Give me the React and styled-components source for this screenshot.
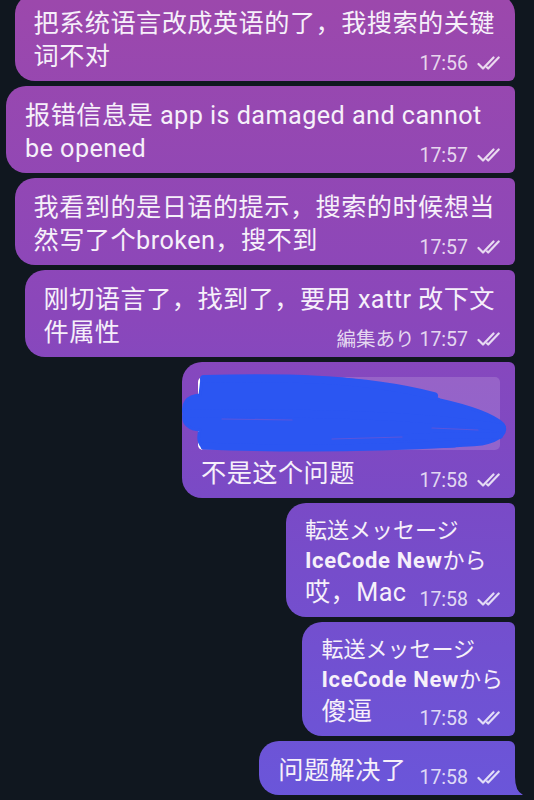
import React from 'react';
import styled, { createGlobalStyle, css } from 'styled-components';

const GlobalStyle = createGlobalStyle`
  html, body {
    margin: 0;
    padding: 0;
    background: #10171f;
  }
  body {
    font-family: Roboto, "Noto Sans CJK SC", sans-serif;
  }
`;

const Chat = styled.main`
  height: 100vh;
  overflow: hidden;
  box-sizing: border-box;
  display: flex;
  flex-direction: column;
  justify-content: flex-end;
  align-items: flex-end;
  gap: 5px;
  padding: 0 19px 5px 0;
`;

const Bubble = styled.div`
  position: relative;
  flex-shrink: 0;
  box-sizing: border-box;
  max-width: 509px;
  padding: 13px 12px 7px 19px;
  border-radius: 20px ${(p) => (p.$first ? '20px' : '6px')}
    ${(p) => (p.$tail ? '0' : '6px')} 20px;
  background: linear-gradient(180deg, #9c48ac 0%, #8a47bb 40%, #7a4ac6 62%, #6a56da 100%) fixed;
  color: #f6f0fa;
  font-size: 25.2px;
  line-height: 33px;
  letter-spacing: 0.45px;

  ${(p) =>
    p.$tail &&
    css`
      &::after {
        content: '';
        position: absolute;
        right: -8px;
        bottom: 0;
        width: 8px;
        height: 18px;
        background: inherit;
        clip-path: path('M0 0 Q0 14 8 18 L0 18 Z');
      }
    `}
`;

const Text = styled.div`
  display: flow-root;
  margin-right: 8px;
  white-space: pre-line;
`;

const Meta = styled.span`
  float: right;
  display: flex;
  align-items: baseline;
  gap: 9px;
  margin: 14px -8px 0 13px;
  font-size: 19.5px;
  line-height: 20px;
  letter-spacing: 0;
  color: rgba(255, 255, 255, 0.8);
  white-space: nowrap;
`;

const Checks = styled.svg`
  width: 26px;
  height: 14px;
  flex-shrink: 0;
`;

const ForwardLine = styled.div`
  font-size: 22px;
  line-height: 30px;
  letter-spacing: 0;
  white-space: nowrap;
`;

const SenderName = styled.b`
  font-weight: 700;
  letter-spacing: 0.7px;
`;

const Quote = styled.div`
  box-sizing: border-box;
  width: 302px;
  height: 73px;
  margin: 2px 3px 7px -3px;
  border-left: 3px solid #ffffff;
  border-radius: 5px;
  background: rgba(255, 255, 255, 0.15);
`;

const Scribble = styled.svg`
  position: absolute;
  left: 0;
  top: 12px;
  width: 333px;
  height: 82px;
  pointer-events: none;
`;

const DoubleCheck = () => (
  <Checks viewBox="0 0 26 14" fill="none" stroke="currentColor" strokeWidth="2.2" strokeLinecap="round" strokeLinejoin="round">
    <path d="M1.5 8 L6 12.5 L16.5 1.5" />
    <path d="M10 11.3 L11.2 12.5 L21.7 1.5" />
  </Checks>
);

const ScribbleMark = () => (
  <Scribble viewBox="0 0 333 82">
    <g fill="#2b56f2" stroke="#2b56f2" strokeLinecap="round" strokeLinejoin="round">
      <path
        strokeWidth="3"
        d="M20 4 C60 2 120 2 160 5 C200 9 235 16 258 26 C285 32 310 40 321 50 C326 58 320 66 300 70 C260 74 120 75 22 73 C16 71 16 62 18 56 C8 56 0 50 2 40 C0 30 4 22 18 21 Z"
      />
      <path fill="none" strokeWidth="8" d="M22 5 C90 3 180 3 252 22" />
      <path fill="none" strokeWidth="8" d="M5 40 C100 38 240 40 320 54" />
      <path fill="none" strokeWidth="7" d="M22 72 C120 76 200 74 272 70" />
      <path fill="none" strokeWidth="6" d="M210 64 C260 61 300 60 318 62" />
    </g>
    <g fill="none" stroke="#7b55cf" strokeWidth="1.2" strokeLinecap="round" opacity="0.6">
      <path d="M40 45 L110 46" />
      <path d="M150 65 L220 63" />
      <path d="M250 54 L296 56" />
    </g>
  </Scribble>
);

const messages = [
  { id: 1, text: '把系统语言改成英语的了，我搜索的关键\n词不对', time: '17:56', first: true },
  { id: 2, text: '报错信息是 app is damaged and cannot be opened', time: '17:57' },
  { id: 3, text: '我看到的是日语的提示，搜索的时候想当\n然写了个broken，搜不到', time: '17:57' },
  { id: 4, text: '刚切语言了，找到了，要用 xattr 改下文\n件属性', time: '17:57', edited: true },
  { id: 5, reply: true, text: '不是这个问题', time: '17:58' },
  { id: 6, forward: 'IceCode New', text: '哎，Mac', time: '17:58' },
  { id: 7, forward: 'IceCode New', text: '傻逼', time: '17:58' },
  { id: 8, text: '问题解决了', time: '17:58', tail: true },
];

const Message = ({ m }) => (
  <Bubble $first={m.first} $tail={m.tail}>
    {m.forward && (
      <>
        <ForwardLine>転送メッセージ</ForwardLine>
        <ForwardLine>
          <SenderName>{m.forward}</SenderName>から
        </ForwardLine>
      </>
    )}
    {m.reply && <Quote />}
    <Text>
      {m.text}
      <Meta>
        <span>{m.edited ? `編集あり ${m.time}` : m.time}</span>
        <DoubleCheck />
      </Meta>
    </Text>
    {m.reply && <ScribbleMark />}
  </Bubble>
);

export default function App() {
  return (
    <>
      <GlobalStyle />
      <Chat>
        {messages.map((m) => (
          <Message key={m.id} m={m} />
        ))}
      </Chat>
    </>
  );
}
